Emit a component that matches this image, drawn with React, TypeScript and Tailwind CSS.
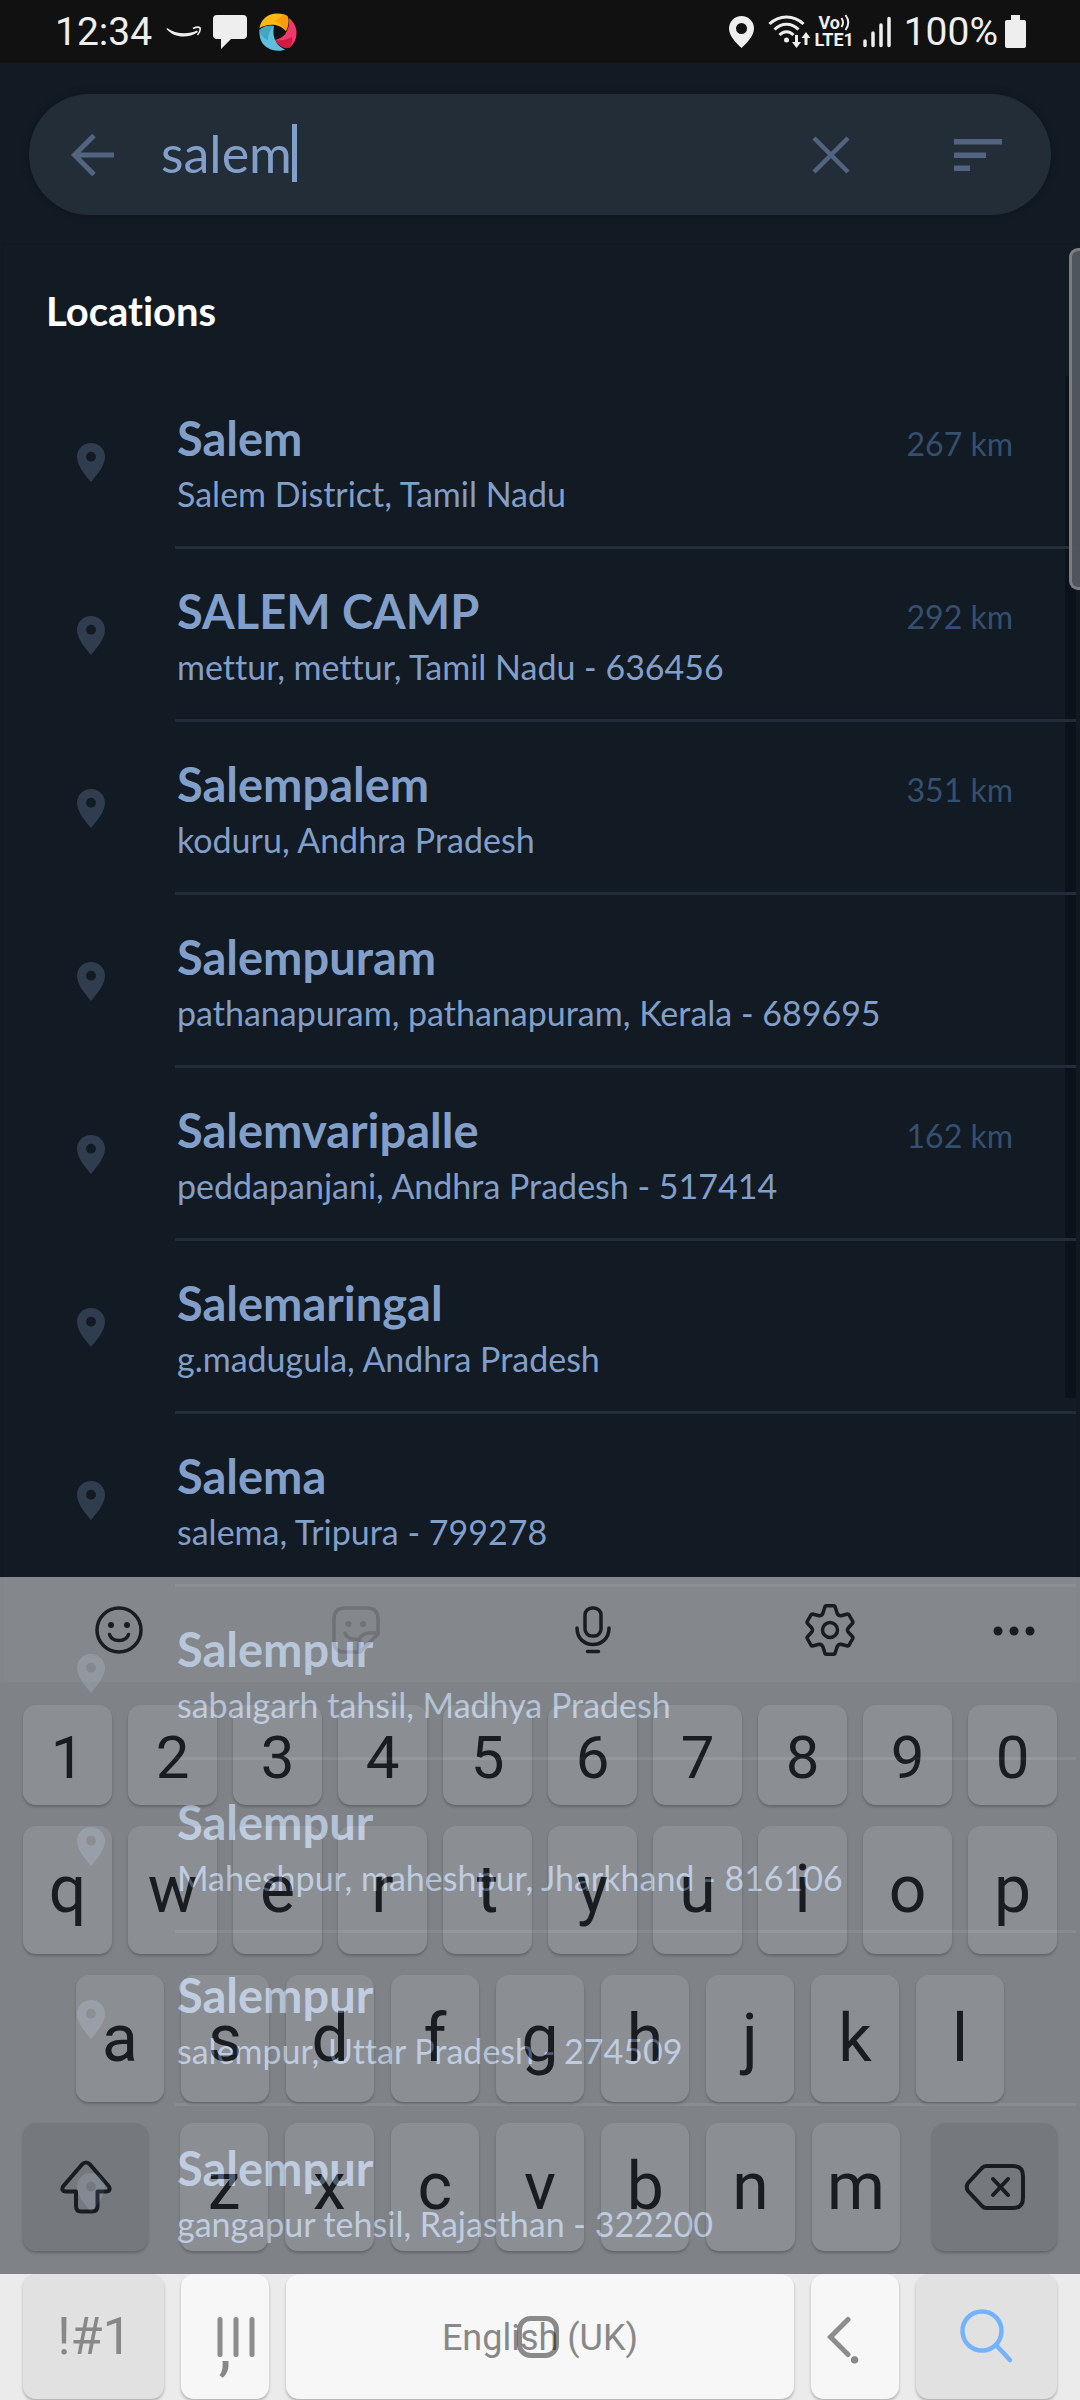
import React, { useState } from "react";

type Place = { name: string; detail: string; distance?: string };

const places: Place[] = [
  { name: "Salem", detail: "Salem District, Tamil Nadu", distance: "267 km" },
  { name: "SALEM CAMP", detail: "mettur, mettur, Tamil Nadu - 636456", distance: "292 km" },
  { name: "Salempalem", detail: "koduru, Andhra Pradesh", distance: "351 km" },
  { name: "Salempuram", detail: "pathanapuram, pathanapuram, Kerala - 689695" },
  { name: "Salemvaripalle", detail: "peddapanjani, Andhra Pradesh - 517414", distance: "162 km" },
  { name: "Salemaringal", detail: "g.madugula, Andhra Pradesh" },
  { name: "Salema", detail: "salema, Tripura - 799278" },
  { name: "Salempur", detail: "sabalgarh tahsil, Madhya Pradesh" },
  { name: "Salempur", detail: "Maheshpur, maheshpur, Jharkhand - 816106" },
  { name: "Salempur", detail: "salempur, Uttar Pradesh - 274509" },
  { name: "Salempur", detail: "gangapur tehsil, Rajasthan - 322200" },
];

function StatusBar() {
  return (
    <header className="flex h-[63px] items-center justify-between bg-[#111111] pr-[54px] pl-[55px] font-[Roboto,sans-serif] text-[#eeeeee]">
      <div className="flex items-center">
        <span className="w-[98px] pt-[2px] text-[39px] leading-[47px]">12:34</span>
        <svg className="ml-[13px] h-[12px] w-[35px]" viewBox="0 0 35 12" aria-hidden="true">
          <path d="M1 2C9 8 22 9 31 4.500L32 6C22 13 8 12 0.500 3Z" fill="#eee" />
          <path d="M27 2.500C30 1 33 1 34 1.800C34.500 4 33.500 7 31.500 9" fill="none" stroke="#eee" strokeWidth="1.600" />
        </svg>
        <svg className="ml-[12px] h-[34px] w-[34px]" viewBox="0 0 34 34" fill="#eee" aria-hidden="true">
          <path d="M4 0H30Q34 0 34 4V20Q34 24 30 24H18L8 34V24H4Q0 24 0 20V4Q0 0 4 0Z" />
        </svg>
        <svg className="ml-[12px] h-[38px] w-[38px]" viewBox="0 0 38 38" aria-hidden="true">
          <path d="M0.500 15C2 6 9 0.500 18 0.500C23 0.500 27 2 29 4C30 9 29 14 27 18C22 12 12 9 0.500 15Z" fill="#fdb813" />
          <path d="M16 8C20 6 23 3 24 1C27 1.800 29 3.500 29 4C30 9 29 14 27 18C24 13 21 10 16 8Z" fill="#fb9a0a" />
          <path d="M30 5C35 9 37.500 14 37.500 20C37.500 27 34 32 30 35C24 35.500 19 32 15.500 27C24 26 31 19 30 5Z" fill="#f0386b" />
          <path d="M15.500 27C21 28 28 27 33 24C34 28 32 33 30 35C24 35.500 19 32 15.500 27Z" fill="#cf1b3f" />
          <path d="M15 13C13 23 16 32 26 36.500C22 38.500 14 38.500 8 34.500C2 30.500 0 24 0.500 17C4 13 10 12 15 13Z" fill="#5cc0dc" />
          <path d="M0.500 17C4 13 10 12 15 13C12 15 9 21 9 27C5 26 1 21 0.500 17Z" fill="#42a7c0" />
        </svg>
      </div>
      <div className="flex items-center">
        <svg className="h-[32px] w-[25px]" viewBox="0 0 25 32" fill="#eee" aria-hidden="true">
          <path
            fillRule="evenodd"
            d="M12.500 0C19.500 0 25 5.500 25 12.500C25 20 17 28 12.500 32C8 28 0 20 0 12.500C0 5.500 5.500 0 12.500 0ZM12.500 7A5.500 5.500 0 1 0 12.500 18A5.500 5.500 0 1 0 12.500 7Z"
          />
        </svg>
        <svg className="ml-[14px] h-[34px] w-[43px]" viewBox="0 0 43 34" fill="none" stroke="#eee" strokeWidth="3" aria-hidden="true">
          <path d="M1.500 9C11 -0.500 26 -0.500 35.500 9M6.500 14.500C13.500 7.500 23.500 7.500 30.500 14.500M11.500 20C15.500 15.500 21.500 15.500 25.500 20" />
          <circle cx="18.500" cy="25" r="2.500" fill="#eee" stroke="none" />
          <path d="M28.500 20V28M38 30V22" />
          <path d="M24 27H33L28.500 33ZM33.500 23H42.500L38 17Z" fill="#eee" stroke="none" />
        </svg>
        <div className="ml-[4px] flex w-[39px] flex-col items-center font-bold">
          <span className="flex items-center text-[18px] leading-[17px]">
            Vo
            <svg className="h-[17px] w-[10px]" viewBox="0 0 10 17" fill="none" stroke="#eee" strokeWidth="2" aria-hidden="true">
              <path d="M1.500 4Q4.500 8.500 1.500 13M5.500 1Q11 8.500 5.500 16" />
            </svg>
          </span>
          <span className="text-[18px] leading-[18px]">LTE1</span>
        </div>
        <svg className="ml-[9px] h-[32px] w-[28px]" viewBox="0 0 28 32" stroke="#eee" strokeWidth="3.500" strokeLinecap="round" aria-hidden="true">
          <path d="M2 25V29.500M10 17V29.500M18 9V29.500M26 2.500V29.500" />
        </svg>
        <span className="ml-[13px] pt-[2px] text-[39px] leading-[47px]">100%</span>
        <svg className="ml-[7px] h-[33px] w-[21px]" viewBox="0 0 21 33" fill="#eee" aria-hidden="true">
          <path d="M6 0H15V5H19Q21 5 21 7V31Q21 33 19 33H2Q0 33 0 31V7Q0 5 2 5H6Z" />
        </svg>
      </div>
    </header>
  );
}

function SearchBar() {
  const [query, setQuery] = useState("salem");
  return (
    <form
      className="mx-[29px] mt-[31px] flex h-[121px] items-center rounded-full bg-[#232d38] shadow-[0_0_8px_rgba(0,0,0,0.25)]"
      onSubmit={(e) => e.preventDefault()}
    >
      <button type="button" aria-label="Back" className="ml-[42px] flex h-[48px] w-[44px] items-center">
        <svg className="h-[42px] w-[44px]" viewBox="0 0 44 42" fill="none" stroke="#52647f" strokeWidth="5" aria-hidden="true">
          <path d="M23 1.500L3.500 21L23 40.500M3.500 21H43" />
        </svg>
      </button>
      <div className="ml-[46px] flex flex-1 items-center pb-[3px]">
        <input
          type="text"
          aria-label="Search locations"
          value={query}
          onChange={(e) => setQuery(e.target.value)}
          className="field-sizing-content bg-transparent font-[Lato,sans-serif] text-[52px] leading-[62px] text-[#829fc9] outline-none"
        />
        <span className="h-[58px] w-[5px] bg-[#829fc9]" />
      </div>
      <button type="button" aria-label="Clear" className="mr-[104px]">
        <svg className="h-[38px] w-[38px]" viewBox="0 0 38 38" stroke="#52647f" strokeWidth="4.500" aria-hidden="true">
          <path d="M2 2L36 36M36 2L2 36" />
        </svg>
      </button>
      <button type="button" aria-label="Sort" className="mr-[49px]">
        <svg className="h-[34px] w-[48px]" viewBox="0 0 48 34" fill="#52647f" aria-hidden="true">
          <path d="M0 1H48V6.500H0ZM0 14.500H32V20H0ZM0 27.500H16V33H0Z" />
        </svg>
      </button>
    </form>
  );
}

function PlaceRow({ place }: { place: Place }) {
  return (
    <li>
      <button type="button" className="flex h-[173px] w-full items-stretch text-left">
        <span className="flex w-[171px] items-center justify-center pl-[2px]">
          <svg className="h-[39px] w-[28px]" viewBox="0 0 28 39" fill="#2f3d4f" aria-hidden="true">
            <path
              fillRule="evenodd"
              d="M14 0C21.800 0 28 6 28 13.700C28 23 19 33 14 39C9 33 0 23 0 13.700C0 6 6.200 0 14 0ZM14 8.800A4.900 4.900 0 1 0 14 18.600A4.900 4.900 0 1 0 14 8.800Z"
            />
          </svg>
        </span>
        <span className="flex flex-1 justify-between border-b-3 border-[#232d39] pt-[35px] pr-[63px] pl-[2px]">
          <span className="flex flex-col text-[#829fc9]">
            <span className="text-[47px] leading-[54px] font-bold">{place.name}</span>
            <span className="text-[34px] leading-[58px]">{place.detail}</span>
          </span>
          <span className="pt-[9px] text-[32px] leading-[48px] text-[#34506f]">{place.distance}</span>
        </span>
      </button>
    </li>
  );
}

const keyShape = "flex items-center justify-center rounded-[13px] shadow-[0_2px_3px_rgba(0,0,0,0.25)]";

function Key({ tone = "light", label, className = "", children }: {
  tone?: "light" | "dark";
  label?: string;
  className?: string;
  children: React.ReactNode;
}) {
  return (
    <button
      type="button"
      aria-label={label}
      className={`${keyShape} ${tone === "light" ? "bg-[#f7f7f7]" : "bg-[#cdcdcd]"} ${className}`}
    >
      {children}
    </button>
  );
}

function Toolbar() {
  return (
    <div className="grid h-[105px] grid-cols-[237fr_237fr_237fr_237fr_132fr] items-center justify-items-center bg-[#e9e9e9]">
      <button type="button" aria-label="Emoji">
        <svg className="h-[50px] w-[50px]" viewBox="0 0 50 50" fill="none" stroke="#202020" strokeWidth="3.500" strokeLinecap="round" aria-hidden="true">
          <circle cx="25" cy="25" r="22" />
          <path d="M15.500 29.500C18 37.500 32 37.500 34.500 29.500" />
          <g fill="#202020" stroke="none">
            <circle cx="17" cy="20" r="3" />
            <circle cx="33" cy="20" r="3" />
          </g>
        </svg>
      </button>
      <button type="button" aria-label="Stickers">
        <svg className="h-[50px] w-[50px]" viewBox="0 0 50 50" fill="none" stroke="#c2c2c2" strokeWidth="3.500" strokeLinecap="round" strokeLinejoin="round" aria-hidden="true">
          <path d="M14 3H36Q47 3 47 14V29L29 47H14Q3 47 3 36V14Q3 3 14 3Z" />
          <path d="M47 28H39Q28 28 28 39V46M14 28C16 33 21 35 27 34" />
          <g fill="#c2c2c2" stroke="none">
            <circle cx="17.500" cy="19" r="3" />
            <circle cx="32" cy="19" r="3" />
          </g>
        </svg>
      </button>
      <button type="button" aria-label="Voice input">
        <svg className="h-[50px] w-[38px]" viewBox="0 0 38 50" fill="none" stroke="#202020" strokeWidth="3.500" strokeLinecap="round" aria-hidden="true">
          <rect x="11" y="3" width="16" height="28" rx="7" />
          <path d="M3 23C3 45 35 45 35 23M13.500 46.500H24.500" />
        </svg>
      </button>
      <button type="button" aria-label="Settings">
        <svg className="h-[52px] w-[52px]" viewBox="0 0 52 52" fill="none" stroke="#202020" strokeWidth="3.500" strokeLinejoin="round" aria-hidden="true">
          <path d="M21 2.500Q21.300 1.800 22 1.800H30Q30.700 1.800 31 2.500L33 9Q34.200 12 37 11.700L43.500 10Q44.500 10 45 10.800L48.800 17.500Q49.200 18.300 48.800 19L44.200 24Q42.800 26 44.200 28L48.800 33Q49.200 33.700 48.800 34.500L45 41.200Q44.500 42 43.500 42L37 40.300Q34.200 40 33 43L31 49.500Q30.700 50.200 30 50.200H22Q21.300 50.200 21 49.500L19 43Q17.800 40 15 40.300L8.500 42Q7.500 42 7 41.200L3.200 34.500Q2.800 33.700 3.200 33L7.800 28Q9.200 26 7.800 24L3.200 19Q2.800 18.300 3.200 17.500L7 10.800Q7.500 10 8.500 10L15 11.700Q17.800 12 19 9Z" />
          <circle cx="26" cy="26" r="7.500" />
        </svg>
      </button>
      <button type="button" aria-label="More">
        <svg className="mt-[2px] h-[10px] w-[42px]" viewBox="0 0 42 10" fill="#202020" aria-hidden="true">
          <circle cx="5" cy="5" r="4.500" />
          <circle cx="21" cy="5" r="4.500" />
          <circle cx="37" cy="5" r="4.500" />
        </svg>
      </button>
    </div>
  );
}

function Keyboard() {
  return (
    <section aria-label="Keyboard" className="absolute inset-x-0 bottom-0 font-[Roboto,sans-serif] text-[#202020]">
      <div className="opacity-[0.53]">
        <Toolbar />
        <div className="flex flex-col gap-[21px] bg-[#e1e1e1] px-[23px] pt-[23px] pb-[23px] text-[66px] leading-[78px]">
          <div className="grid h-[100px] grid-cols-10 gap-[16px] text-[60px]">
            {"1234567890".split("").map((k) => (
              <Key key={k} className="pt-[6px]">{k}</Key>
            ))}
          </div>
          <div className="grid h-[128px] grid-cols-10 gap-[16px]">
            {"qwertyuiop".split("").map((k) => (
              <Key key={k}>{k}</Key>
            ))}
          </div>
          <div className="grid h-[127px] grid-cols-9 gap-[17px] px-[53px]">
            {"asdfghjkl".split("").map((k) => (
              <Key key={k}>{k}</Key>
            ))}
          </div>
          <div className="flex h-[128px] gap-[32px]">
            <Key tone="dark" label="Shift" className="w-[125px]">
              <svg className="h-[54px] w-[52px]" viewBox="0 0 52 54" fill="none" stroke="#202020" strokeWidth="4" strokeLinejoin="round" aria-hidden="true">
                <path d="M22 4.500Q26 0.500 30 4.500L49 26.500Q51 31 46.500 31.500H37.500V46Q37.500 51.500 32 51.500H21Q16 51.500 16 46V31.500H5.500Q1 31 3 26.500Z" />
              </svg>
            </Key>
            <div className="grid flex-1 grid-cols-7 gap-[17px]">
              {"zxcvbnm".split("").map((k) => (
                <Key key={k}>{k}</Key>
              ))}
            </div>
            <Key tone="dark" label="Backspace" className="w-[125px]">
              <svg className="h-[48px] w-[62px]" viewBox="0 0 62 48" fill="none" stroke="#202020" strokeWidth="4" strokeLinecap="round" strokeLinejoin="round" aria-hidden="true">
                <path d="M22 3H49Q59 3 59 13V35Q59 45 49 45H22Q20 45 18 43L4 28Q1.500 24 4 20L18 5Q20 3 22 3Z" />
                <path d="M29 16L44 32M44 16L29 32" />
              </svg>
            </Key>
          </div>
        </div>
      </div>

      <div className="relative bg-[#ebebeb] px-[23px] pb-[1px]">
        <div className="flex h-[125px] gap-[17px] text-[#888888]">
          <Key tone="dark" className="w-[141px] bg-[#e1e1e1]! pl-[2px] text-[52px] leading-[64px]">!#1</Key>
          <Key className="w-[88px] pt-[18px] text-[66px] leading-[78px]">,</Key>
          <Key className="flex-1 pt-[3px] text-[36px] leading-[42px]">English (UK)</Key>
          <Key className="w-[88px] pt-[8px] text-[66px] leading-[78px]">.</Key>
          <Key tone="dark" label="Search" className="w-[141px] bg-[#e1e1e1]! pb-[2px]">
            <svg className="h-[56px] w-[54px]" viewBox="0 0 54 56" fill="none" stroke="#74b3fb" strokeWidth="4.500" strokeLinecap="round" aria-hidden="true">
              <circle cx="22" cy="23" r="19.500" />
              <path d="M36 37L50 52" />
            </svg>
          </Key>
        </div>
        <nav
          aria-label="System navigation"
          className="pointer-events-none absolute inset-0 grid grid-cols-3 items-center justify-items-center pr-[89px] pl-[85px]"
        >
          <button type="button" aria-label="Recent apps">
            <svg className="h-[42px] w-[40px]" viewBox="0 0 40 42" stroke="#8c8c8c" strokeWidth="5" strokeLinecap="round" aria-hidden="true">
              <path d="M4 3.500V38.500M20 3.500V38.500M36 3.500V38.500" />
            </svg>
          </button>
          <button type="button" aria-label="Home">
            <svg className="h-[42px] w-[42px]" viewBox="0 0 42 42" fill="none" stroke="#000" strokeOpacity="0.44" strokeWidth="5" aria-hidden="true">
              <rect x="2.500" y="2.500" width="37" height="37" rx="11" />
            </svg>
          </button>
          <button type="button" aria-label="Hide keyboard">
            <svg className="h-[42px] w-[26px]" viewBox="0 0 26 42" fill="none" stroke="#8c8c8c" strokeWidth="5" strokeLinecap="round" aria-hidden="true">
              <path d="M21 3.500L3.500 21L21 38.500" />
            </svg>
          </button>
        </nav>
      </div>
    </section>
  );
}

export default function App() {
  return (
    <div className="relative min-h-screen overflow-hidden bg-[#121a23] font-[Lato,sans-serif] [font-variant-ligatures:none]">
      <StatusBar />
      <SearchBar />
      <main className="relative mx-[4px] mt-[30px] shadow-[0_0_3px_rgba(0,0,0,0.2)]">
        <h1 className="h-[131px] pt-[42px] pl-[42px] text-[40px] leading-[48px] font-bold text-white">Locations</h1>
        <div className="absolute top-[131px] right-0 h-[1022px] w-[11px] bg-[#0b1219]" />
        <ul className="relative">
          {places.map((place, i) => (
            <PlaceRow key={i} place={place} />
          ))}
        </ul>
        <div className="absolute top-[3px] -right-[4px] h-[342px] w-[11px] rounded-l-[9px] border-3 border-r-0 border-[#7b7d7f] bg-[#575d62]/90" />
      </main>
      <Keyboard />
    </div>
  );
}
